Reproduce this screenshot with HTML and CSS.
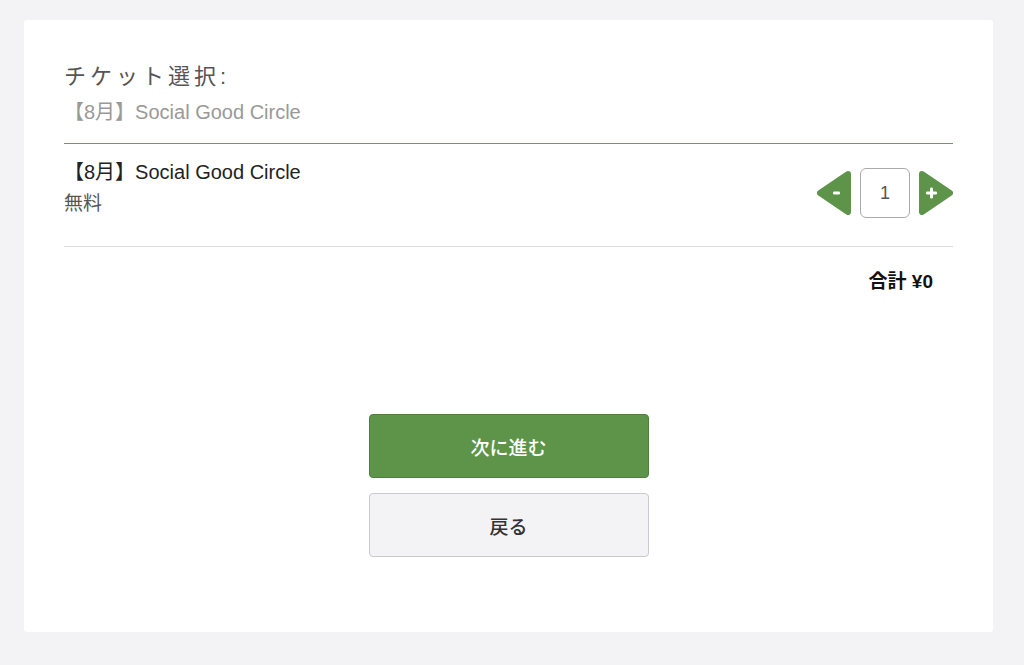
FILE: index.html
```html
<!DOCTYPE html>
<html lang="ja">
<head>
    <meta charset="UTF-8">
    <meta name="viewport" content="width=device-width, initial-scale=1.0">
    <title>チケット選択</title>
    <link rel="stylesheet" href="styles.css">
</head>
<body>

    <div class="card">
        <!-- Header -->
        <div class="ticket-header">
            <h1 class="ticket-title">チケット選択:</h1>
            <p class="event-name">【8月】Social Good Circle</p>
        </div>

        <!-- Ticket row -->
        <div class="ticket-row">
            <div class="ticket-info">
                <div class="ticket-name">【8月】Social Good Circle</div>
                <div class="ticket-price">無料</div>
            </div>
            <div class="stepper">
                <button class="step-button" aria-label="減らす">
                    <svg width="34" height="44" viewBox="0 0 34 44">
                        <polygon points="31,3 3,22 31,41" fill="#5e9449" stroke="#5e9449" stroke-width="6" stroke-linejoin="round"/>
                        <rect x="16" y="20.5" width="7" height="3" rx="1.2" fill="#fff"/>
                    </svg>
                </button>
                <div class="qty-box">1</div>
                <button class="step-button" aria-label="増やす">
                    <svg width="34" height="44" viewBox="0 0 34 44">
                        <polygon points="3,3 31,22 3,41" fill="#5e9449" stroke="#5e9449" stroke-width="6" stroke-linejoin="round"/>
                        <rect x="7" y="20.5" width="11" height="3" rx="1.2" fill="#fff"/>
                        <rect x="11" y="16.5" width="3" height="11" rx="1.2" fill="#fff"/>
                    </svg>
                </button>
            </div>
        </div>

        <div class="total">合計 ¥0</div>

        <div class="actions">
            <button class="next-button">次に進む</button>
            <button class="back-button">戻る</button>
        </div>
    </div>

</body>
</html>
```

FILE: styles.css
```css
body {
    margin: 0;
    background-color: #f3f3f6;
    font-family: 'Liberation Sans', 'Noto Sans CJK JP', sans-serif;
    color: #333;
}

.card {
    background-color: #fff;
    margin: 20px 31px 0 24px;
    height: 612px;
    box-sizing: border-box;
    padding: 41px 40px 40px;
    border-radius: 3px;
}

/* Header */
.ticket-header {
    padding-bottom: 17px;
    border-bottom: 1px solid #6b9e55;
}
.ticket-title {
    margin: 0 0 6px;
    font-size: 22px;
    font-weight: normal;
    line-height: 31px;
    letter-spacing: 4px;
    color: #555;
}
.event-name {
    margin: 0;
    font-size: 20px;
    line-height: 28px;
    color: #999;
}

/* Ticket row */
.ticket-row {
    display: flex;
    justify-content: space-between;
    align-items: flex-start;
    padding: 13px 0 27px;
    border-bottom: 1px solid #dcdcdc;
}
.ticket-name {
    font-size: 20px;
    line-height: 30px;
    color: #222;
}
.ticket-price {
    margin-top: 2px;
    font-size: 19px;
    line-height: 30px;
    color: #555;
}
.stepper {
    display: flex;
    align-items: center;
    gap: 9px;
    margin-top: 11px;
}
.step-button {
    background: none;
    border: none;
    padding: 0;
    width: 34px;
    height: 44px;
    cursor: pointer;
}
.step-button svg {
    display: block;
}
.qty-box {
    width: 48px;
    height: 48px;
    border: 1px solid #aaa;
    border-radius: 6px;
    display: flex;
    align-items: center;
    justify-content: center;
    font-size: 18px;
    color: #555;
}

/* Total */
.total {
    margin-top: 21px;
    padding-right: 20px;
    text-align: right;
    font-size: 19px;
    line-height: 28px;
    font-weight: bold;
    color: #111;
}

/* Buttons */
.actions {
    display: flex;
    flex-direction: column;
    align-items: center;
    gap: 15px;
    margin-top: 118px;
}
.next-button, .back-button {
    width: 280px;
    height: 64px;
    border-radius: 4px;
    font-family: 'Liberation Sans', 'Noto Sans CJK JP', sans-serif;
    font-size: 19px;
    cursor: pointer;
}
.next-button {
    background-color: #5e9449;
    border: 1px solid #4e7f3b;
    color: #fff;
    font-weight: 500;
}
.back-button {
    background-color: #f3f3f6;
    border: 1px solid #c9c9cf;
    color: #333;
    font-weight: 500;
}
```
